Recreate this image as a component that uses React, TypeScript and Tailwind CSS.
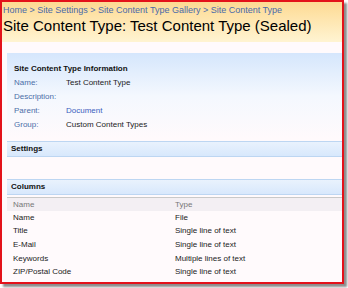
const infoRows = [
  { label: 'Name:', value: 'Test Content Type', link: false },
  { label: 'Description:', value: '', link: false },
  { label: 'Parent:', value: 'Document', link: true },
  { label: 'Group:', value: 'Custom Content Types', link: false },
];

const columns = [
  { name: 'Name', type: 'File' },
  { name: 'Title', type: 'Single line of text' },
  { name: 'E-Mail', type: 'Single line of text' },
  { name: 'Keywords', type: 'Multiple lines of text' },
  { name: 'ZIP/Postal Code', type: 'Single line of text' },
];

function SectionBar({ title }: { title: string }) {
  return (
    <div className="h-[16px] flex items-center pl-[4px] border-y border-[#bdd6f2] bg-gradient-to-b from-[#e9f2fd] to-[#d8e8fc] text-[8px] font-bold text-[#111]">
      {title}
    </div>
  );
}

export default function App() {
  return (
    <div className="w-[348px] h-[288px] bg-white" style={{ fontFamily: '"Liberation Sans", Arial, sans-serif' }}>
      <div className="w-[344px] h-[284px] border-2 border-[#e3121a] bg-[#fffafc] shadow-[3px_3px_2px_rgba(0,0,0,0.45)] flex flex-col overflow-hidden">
        {/* Title area */}
        <div className="h-[40px] shrink-0 bg-gradient-to-b from-[#fdda92] to-[#fff4d2] pl-[1px]">
          <div className="pt-[3px] text-[9px] leading-[11px] text-[#4a6aaa] whitespace-nowrap">
            Home &gt; Site Settings &gt; Site Content Type Gallery &gt; Site Content Type
          </div>
          <div className="text-[15px] leading-[20px] text-black whitespace-nowrap">
            Site Content Type: Test Content Type (Sealed)
          </div>
        </div>

        <div className="pl-[5px] pt-[11px] flex flex-col">
          {/* Info panel */}
          <div className="h-[86px] bg-gradient-to-b from-[#d5e6fc] via-[#f4f8fe] to-[#fffafc] px-[7px] pt-[9px] text-[8px]">
            <div className="font-bold text-[#111] leading-[14px]">Site Content Type Information</div>
            {infoRows.map((r) => (
              <div key={r.label} className="flex h-[14px] items-center">
                <span className="w-[52px] text-[#4b6ea8]">{r.label}</span>
                <span className={r.link ? 'text-[#3b5dbd]' : 'text-[#222]'}>{r.value}</span>
              </div>
            ))}
          </div>

          <div className="mt-[2px]">
            <SectionBar title="Settings" />
          </div>
          <div className="h-[22px]" />
          <SectionBar title="Columns" />

          {/* Columns table */}
          <div className="mt-[2px] border-t border-[#c9c9c9] h-[14px] bg-[#f3eff3] flex items-center text-[8px] text-[#777] pl-[6px]">
            <span className="w-[162px]">Name</span>
            <span>Type</span>
          </div>
          {columns.map((c) => (
            <div key={c.name} className="h-[13.6px] flex items-center text-[8px] text-[#222] pl-[6px] first:mt-[0px]">
              <span className="w-[162px]">{c.name}</span>
              <span>{c.type}</span>
            </div>
          ))}
        </div>
      </div>
    </div>
  );
}
